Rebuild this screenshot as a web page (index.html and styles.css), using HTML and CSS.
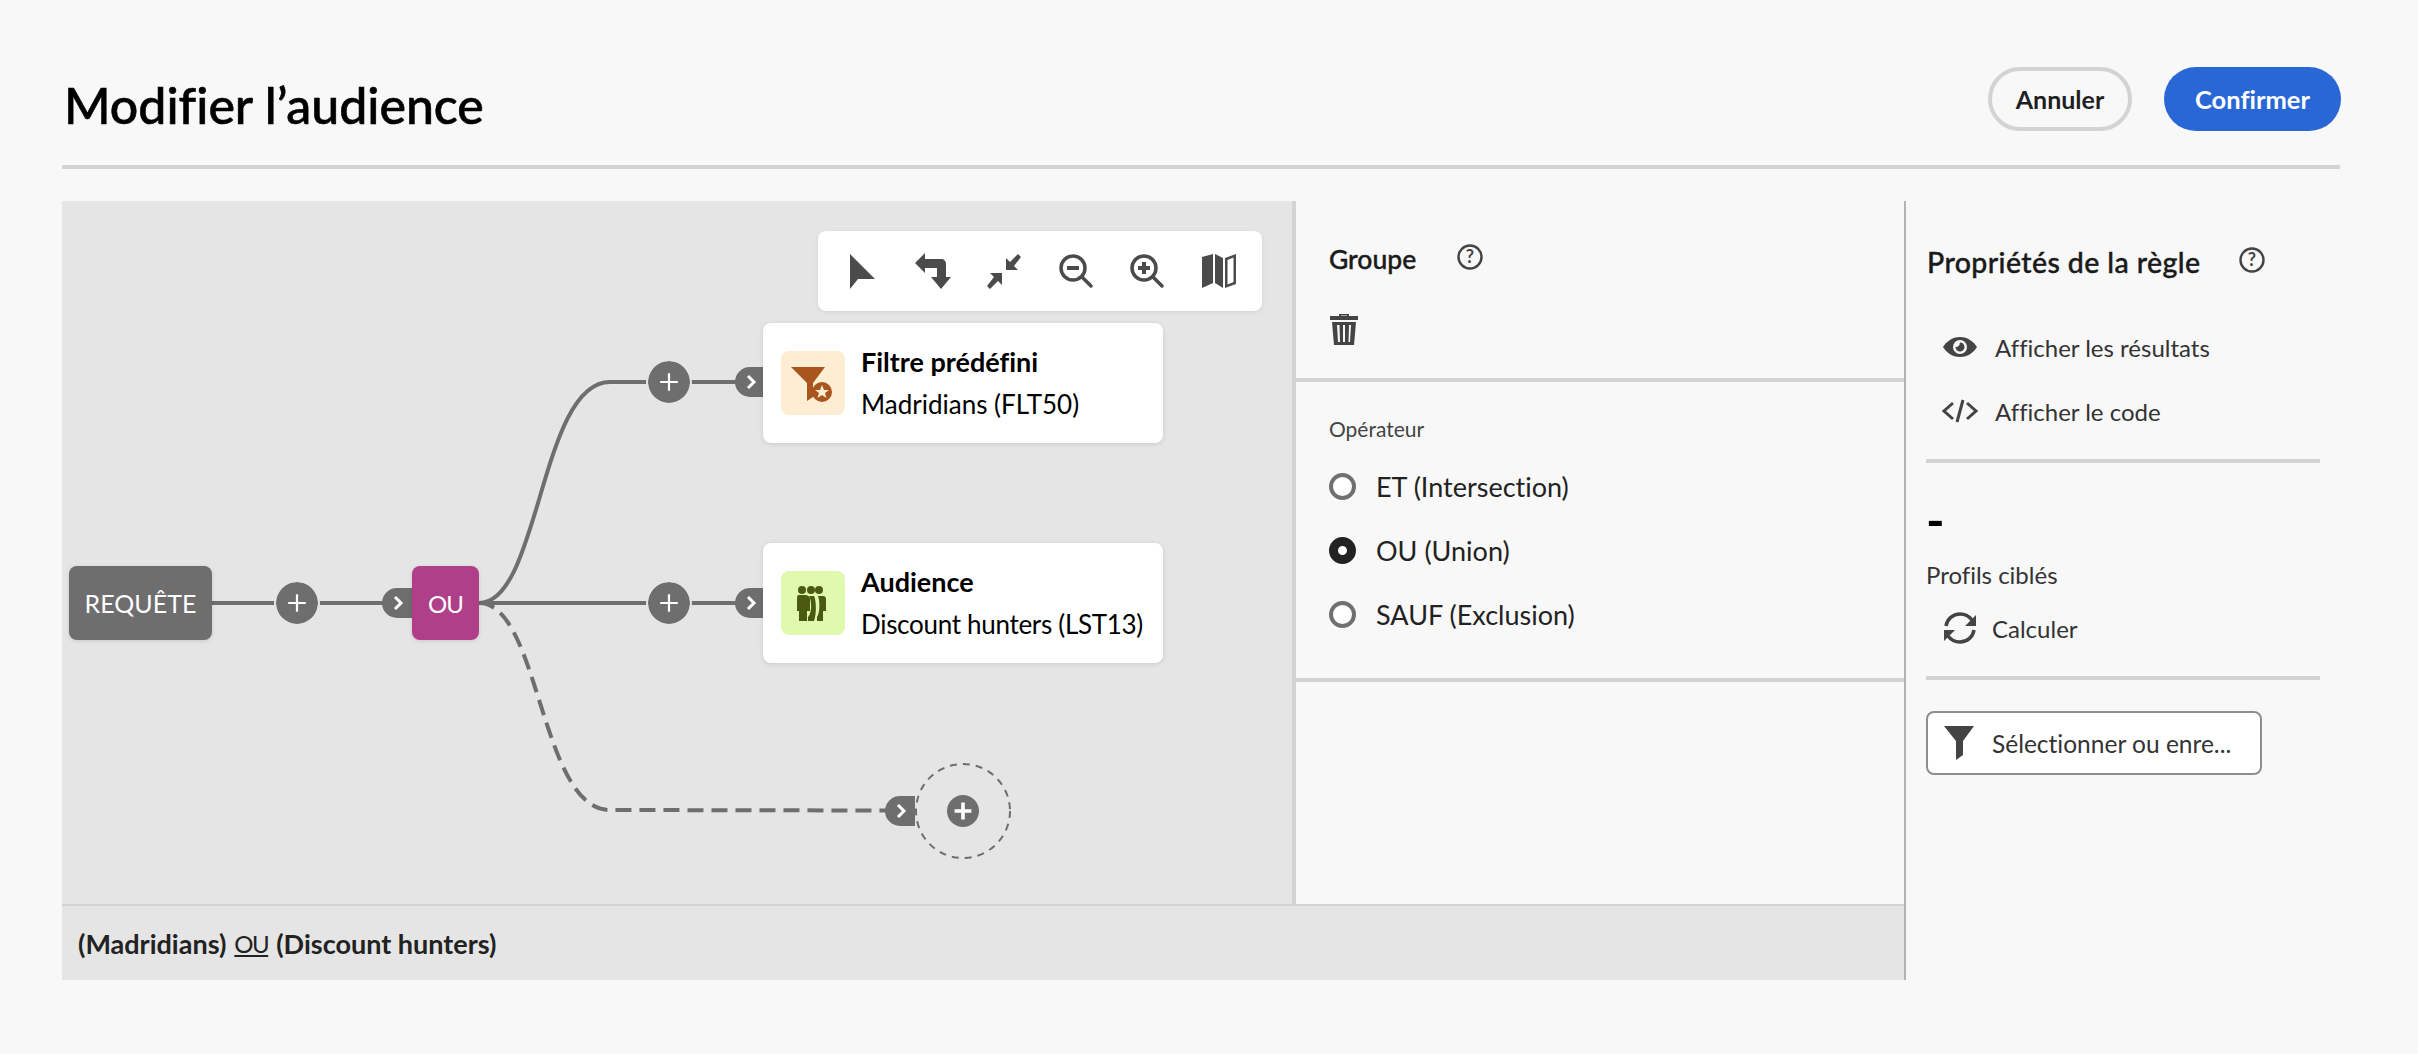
FILE: index.html
```html
<!DOCTYPE html>
<html lang="fr">
<head>
    <meta charset="UTF-8">
    <title>Modifier l'audience</title>
    <link rel="stylesheet" href="styles.css">
</head>
<body>
    <header class="page-header">
        <h1>Modifier l’audience</h1>
        <div class="header-actions">
            <button type="button" class="btn btn-cancel">Annuler</button>
            <button type="button" class="btn btn-confirm">Confirmer</button>
        </div>
    </header>

    <main class="workspace">
        <div class="editor">
            <div class="editor-top">
                <section class="canvas">
                    <svg class="links" width="1230" height="703" viewBox="0 0 1230 703">
                        <path class="link" d="M150 402H350"/>
                        <path class="link" d="M417 402C478 402 478 181 548 181H680"/>
                        <path class="link" d="M417 402H680"/>
                        <path class="link dashed" d="M417 402C478 402 478 609 548 609L830 609.5"/>
                        <circle class="drop-zone" cx="901" cy="610" r="47"/>
                    </svg>

                    <div class="toolbar">
                        <svg class="tool" viewBox="0 0 36 36"><path d="M7 1L32 26H15L7 36Z"/></svg>
                        <svg class="tool" viewBox="0 0 36 36"><path d="M0 10L10 0V6H26C29 6 31 8 31 11V24H36L26 36L16 24H22V15H10V20Z"/></svg>
                        <svg class="tool" viewBox="0 0 36 36"><path d="M35 4L32 1L24 9L20 5V17H32L28 13ZM1 33L4 36L12 28L16 32V20H4L8 24Z"/></svg>
                        <svg class="tool" viewBox="0 0 36 36"><circle class="ring" cx="15" cy="15" r="12"/><path class="ring" d="M24 24L33 33"/><path d="M9 13H21V17H9Z"/></svg>
                        <svg class="tool" viewBox="0 0 36 36"><circle class="ring" cx="15" cy="15" r="12"/><path class="ring" d="M24 24L33 33"/><path d="M9 13H13V9H17V13H21V17H17V21H13V17H9Z"/></svg>
                        <svg class="tool" viewBox="0 0 36 36"><path d="M1 4L12 1V30L1 35ZM14 1L22 5V35L14 30ZM24 5L35 1V31L24 35ZM26.500 7V31.500L32.500 29V4.500Z" fill-rule="evenodd"/></svg>
                    </div>

                    <div class="node node-query">REQUÊTE</div>
                    <button type="button" class="add add-1"><svg viewBox="0 0 20 20"><path d="M9 2H11V9H18V11H11V18H9V11H2V9H9Z"/></svg></button>
                    <div class="pill pill-1"><svg viewBox="0 0 12 16"><path d="M2 2L8 8L2 14" /></svg></div>
                    <div class="node node-or">OU</div>

                    <button type="button" class="add add-2"><svg viewBox="0 0 20 20"><path d="M9 2H11V9H18V11H11V18H9V11H2V9H9Z"/></svg></button>
                    <div class="pill pill-2"><svg viewBox="0 0 12 16"><path d="M2 2L8 8L2 14" /></svg></div>
                    <article class="card card-1">
                        <div class="tile tile-filter">
                            <svg viewBox="0 0 64 64">
                                <path d="M10 16H44L32 32V46L26 50V32Z"/>
                                <circle cx="41" cy="41" r="10"/>
                                <path class="star" d="M41 34L43 39H48L44 42L45.5 47L41 44L36.500 47L38 42L34 39H39Z"/>
                            </svg>
                        </div>
                        <div class="card-text">
                            <strong>Filtre prédéfini</strong>
                            <span>Madridians (FLT50)</span>
                        </div>
                    </article>

                    <button type="button" class="add add-3"><svg viewBox="0 0 20 20"><path d="M9 2H11V9H18V11H11V18H9V11H2V9H9Z"/></svg></button>
                    <div class="pill pill-3"><svg viewBox="0 0 12 16"><path d="M2 2L8 8L2 14" /></svg></div>
                    <article class="card card-2">
                        <div class="tile tile-audience">
                            <svg viewBox="0 0 64 64">
                                <circle cx="21" cy="19" r="4"/><circle cx="30" cy="19" r="4"/><circle cx="38" cy="19" r="4"/>
                                <path d="M37 25H42C44 25 45 26 45 28V40H42V50H36V46C39 42 39 30 37 25Z"/>
                                <path d="M28 25H33C35 28 36 42 33 50H27V46C31 42 31 30 28 25Z"/>
                                <path d="M18 24H24C27 24 29 26 29 28V40H26V50H18V40H16V28C16 26 16 24 18 24Z"/>
                            </svg>
                        </div>
                        <div class="card-text">
                            <strong>Audience</strong>
                            <span>Discount hunters (LST13)</span>
                        </div>
                    </article>

                    <div class="pill pill-4"><svg viewBox="0 0 12 16"><path d="M2 2L8 8L2 14" /></svg></div>
                    <button type="button" class="add-empty"><svg viewBox="0 0 20 20"><path d="M8.500 3H11.500V8.500H17V11.500H11.500V17H8.500V11.500H3V8.500H8.500Z"/></svg></button>
                </section>

                <section class="group-panel">
                    <div class="group-head">
                        <div class="title-row">
                            <h2>Groupe</h2>
                            <svg class="help" viewBox="0 0 26 26"><circle cx="13" cy="13" r="11.500"/><text x="13" y="18.500" text-anchor="middle">?</text></svg>
                        </div>
                        <svg class="trash" viewBox="0 0 30 32"><path d="M10 3V1H20V3H29V7H1V3ZM12 3H18V2.500H12ZM3 9H27L25 32H5ZM8 12L9 29H11L10.500 12ZM14 12V29H16V12ZM20 12L19.500 29H21L22 12Z" fill-rule="evenodd"/></svg>
                    </div>
                    <div class="operator">
                        <div class="field-label">Opérateur</div>
                        <label class="radio"><span class="dot"></span>ET (Intersection)</label>
                        <label class="radio"><span class="dot dot-on"></span>OU (Union)</label>
                        <label class="radio"><span class="dot"></span>SAUF (Exclusion)</label>
                    </div>
                </section>
            </div>
            <footer class="expression">
                <b>(Madridians)</b> <u>OU</u> <b>(Discount hunters)</b>
            </footer>
        </div>

        <aside class="rule-panel">
            <div class="title-row rule-title">
                <h2>Propriétés de la règle</h2>
                <svg class="help" viewBox="0 0 26 26"><circle cx="13" cy="13" r="11.500"/><text x="13" y="18.500" text-anchor="middle">?</text></svg>
            </div>
            <div class="rule-links">
                <div class="action">
                    <svg class="action-icon" viewBox="0 0 36 24"><path d="M18 2C26 2 32 7 35 12C32 17 26 22 18 22C10 22 4 17 1 12C4 7 10 2 18 2ZM18 5A7 7 0 1 0 18 19A7 7 0 1 0 18 5ZM18 7.500A4.500 4.500 0 1 1 13.500 12C15 12.500 18 11 18 7.500Z" fill-rule="evenodd"/></svg>
                    Afficher les résultats
                </div>
                <div class="action">
                    <svg class="action-icon" viewBox="0 0 36 24"><path class="code" d="M11 4L2 12L11 20M25 4L34 12L25 20M21 1L15 23"/></svg>
                    Afficher le code
                </div>
            </div>
            <div class="rule-count">
                <div class="count">-</div>
                <div class="count-label">Profils ciblés</div>
                <div class="action action-calc">
                    <svg class="action-icon" viewBox="0 0 36 32"><path class="code" d="M4 14C5 7 11 2 18 2C23 2 27 4 30 8M32 18C31 25 25 30 18 30C13 30 9 28 6 24"/><path d="M34 3V14H23ZM2 29V18H13Z"/></svg>
                    Calculer
                </div>
            </div>
            <button type="button" class="select-btn">
                <svg viewBox="0 0 30 34"><path d="M0 0H30L19 15V29L12 34V15Z"/></svg>
                Sélectionner ou enre...
            </button>
        </aside>
    </main>
</body>
</html>
```

FILE: styles.css
```css
/* Page */
body {
    margin: 0;
    padding: 0 78px 0 62px;
    height: 1054px;
    box-sizing: border-box;
    overflow: hidden;
    background-color: #f8f8f8;
    font-family: Lato, "Noto Sans", sans-serif;
    font-variant-ligatures: none;
    color: #000000;
}

button {
    font-family: inherit;
    font-variant-ligatures: none;
}

/* Header */
.page-header {
    display: flex;
    justify-content: space-between;
    height: 165px;
    border-bottom: 4px solid #d3d3d3;
}

h1 {
    margin: 75px 0 0 2px;
    font-size: 50px;
    line-height: 60px;
    font-weight: 500;
    -webkit-text-stroke: 0.6px #000000;
    color: #000000;
}

.header-actions {
    display: flex;
    gap: 32px;
    margin-top: 67px;
    margin-right: -1px;
}

.btn {
    height: 64px;
    border-radius: 32px;
    font-weight: 700;
    box-sizing: border-box;
}

.btn-cancel {
    width: 144px;
    background: transparent;
    border: 4px solid #d3d3d3;
    color: #1f1f1f;
    font-size: 25px;
}

.btn-confirm {
    width: 177px;
    background-color: #2a67d6;
    border: none;
    color: #ffffff;
    font-size: 25.5px;
}

/* Main layout */
.workspace {
    display: flex;
    height: 779px;
    margin-top: 32px;
}

.editor {
    width: 1842px;
    display: flex;
    flex-direction: column;
}

.editor-top {
    display: flex;
    height: 703px;
}

/* Canvas */
.canvas {
    position: relative;
    width: 1230px;
    background-color: #e5e5e5;
}

.links {
    position: absolute;
    left: 0;
    top: 0;
}

.link {
    fill: none;
    stroke: #6e6e6e;
    stroke-width: 4;
}

.dashed {
    stroke-dasharray: 16 8;
}

.drop-zone {
    fill: none;
    stroke: #6e6e6e;
    stroke-width: 2;
    stroke-dasharray: 7 6;
}

.toolbar {
    position: absolute;
    left: 756px;
    top: 30px;
    width: 444px;
    height: 80px;
    box-sizing: border-box;
    padding: 0 25px;
    display: flex;
    align-items: center;
    justify-content: space-between;
    background-color: #ffffff;
    border-radius: 8px;
    box-shadow: 0 1px 4px rgba(0, 0, 0, 0.08);
}

.tool {
    width: 36px;
    height: 36px;
    fill: #4b4b4b;
}

.ring {
    fill: none;
    stroke: #4b4b4b;
    stroke-width: 3.5;
    stroke-linecap: round;
}

.node {
    position: absolute;
    top: 365px;
    height: 74px;
    display: flex;
    align-items: center;
    justify-content: center;
    border-radius: 8px;
    color: #ffffff;
    font-size: 25px;
    box-shadow: 0 1px 4px rgba(0, 0, 0, 0.12);
}

.node-query {
    left: 7px;
    width: 143px;
    background-color: #6e6e6e;
}

.node-or {
    left: 350px;
    width: 67px;
    background-color: #b03f8a;
    font-size: 24px;
    letter-spacing: -1px;
}

.add {
    position: absolute;
    width: 46px;
    height: 46px;
    padding: 10px;
    box-sizing: border-box;
    border: 2px solid #e5e5e5;
    border-radius: 50%;
    background-color: #6e6e6e;
    background-clip: padding-box;
}

.add svg {
    display: block;
    width: 100%;
    height: 100%;
    fill: #ffffff;
}

.add-1 { left: 212px; top: 379px; }
.add-2 { left: 584px; top: 158px; }
.add-3 { left: 584px; top: 379px; }

.add-empty {
    position: absolute;
    left: 885px;
    top: 594px;
    width: 32px;
    height: 32px;
    padding: 4px;
    border: none;
    border-radius: 50%;
    background-color: #6e6e6e;
}

.add-empty svg {
    display: block;
    fill: #ffffff;
}

.pill {
    position: absolute;
    width: 30px;
    height: 30px;
    box-sizing: border-box;
    padding: 7px 0 0 11px;
    border-radius: 15px 0 0 15px;
    background-color: #6e6e6e;
}

.pill svg {
    display: block;
    width: 12px;
    height: 16px;
    fill: none;
    stroke: #ffffff;
    stroke-width: 3;
}

.pill-1 { left: 320px; top: 387px; }
.pill-2 { left: 673px; top: 166px; }
.pill-3 { left: 673px; top: 387px; }
.pill-4 { left: 823px; top: 595px; }

.card {
    position: absolute;
    left: 701px;
    width: 400px;
    height: 120px;
    box-sizing: border-box;
    padding: 28px 18px;
    display: flex;
    gap: 16px;
    background-color: #ffffff;
    border-radius: 8px;
    box-shadow: 0 1px 5px rgba(0, 0, 0, 0.12);
}

.card-1 { top: 122px; }
.card-2 { top: 342px; }

.card-2 span {
    letter-spacing: -0.3px;
}

.tile {
    flex: none;
    width: 64px;
    height: 64px;
    border-radius: 8px;
}

.tile svg {
    display: block;
}

.tile-filter {
    background-color: #fdeed3;
    fill: #a9551e;
}

.star {
    fill: #fdeed3;
}

.tile-audience {
    background-color: #e0f9ae;
    fill: #4a5a10;
}

.card-text {
    display: flex;
    flex-direction: column;
    margin-top: -10px;
    font-size: 26px;
    line-height: 42px;
    white-space: nowrap;
}

.card-text strong {
    font-size: 27px;
}

/* Group panel */
.group-panel {
    width: 612px;
    border-left: 4px solid #d3d3d3;
    box-sizing: border-box;
}

.group-head {
    height: 181px;
    box-sizing: border-box;
    padding: 42px 0 0 33px;
    border-bottom: 4px solid #d3d3d3;
}

.title-row {
    display: flex;
    align-items: center;
    height: 32px;
}

h2 {
    margin: 0;
    font-size: 26.5px;
    font-weight: 500;
    -webkit-text-stroke: 0.4px #1a1a1a;
    color: #1a1a1a;
}

.help {
    width: 26px;
    height: 26px;
    margin-left: 41px;
    margin-bottom: 4px;
}

.help circle {
    fill: none;
    stroke: #444444;
    stroke-width: 2.4;
}

.help text {
    font-size: 18px;
    font-weight: 700;
    fill: #444444;
}

.trash {
    display: block;
    width: 30px;
    height: 32px;
    margin-top: 38px;
    fill: #444444;
}

.operator {
    height: 300px;
    box-sizing: border-box;
    padding: 32px 0 0 33px;
    border-bottom: 4px solid #d3d3d3;
}

.field-label {
    font-size: 21px;
    line-height: 30px;
    margin-bottom: 10px;
    color: #444444;
}

.radio {
    display: flex;
    align-items: center;
    gap: 20px;
    height: 64px;
    font-size: 27px;
    color: #222222;
}

.dot {
    width: 27px;
    height: 27px;
    box-sizing: border-box;
    background-color: #ffffff;
    border: 4px solid #707070;
    border-radius: 50%;
}

.dot-on {
    background-color: #ffffff;
    border: 9px solid #222222;
}

/* Bottom expression */
.expression {
    height: 76px;
    box-sizing: border-box;
    padding-left: 16px;
    display: flex;
    align-items: center;
    gap: 8px;
    background-color: #e5e5e5;
    border-top: 2px solid #d3d3d3;
    font-size: 27px;
    color: #222222;
}

.expression b {
    font-weight: 700;
}

.expression u {
    font-size: 24px;
    letter-spacing: -1.5px;
}

/* Rule panel */
.rule-panel {
    flex: 1;
    border-left: 2px solid #b3b3b3;
    padding: 0 20px;
}

.rule-title {
    margin: 45px 0 0 1px;
}

.rule-title h2 {
    font-size: 28.5px;
    letter-spacing: 0.4px;
}

.rule-title .help {
    margin-left: 38px;
}

.rule-links {
    height: 185px;
    box-sizing: border-box;
    padding-top: 37px;
    border-bottom: 4px solid #d3d3d3;
}

.action {
    display: flex;
    align-items: center;
    gap: 17px;
    height: 64px;
    padding-left: 16px;
    font-size: 24px;
    color: #333333;
}

.action-icon {
    width: 36px;
    height: 24px;
    fill: #444444;
}

.code {
    fill: none;
    stroke: #444444;
    stroke-width: 3;
}

.action-calc .code {
    stroke-width: 3.5;
}

.rule-count {
    height: 217px;
    box-sizing: border-box;
    padding: 31px 0 0;
    border-bottom: 4px solid #d3d3d3;
}

.count {
    font-size: 50px;
    line-height: 52px;
    font-weight: 700;
}

.count-label {
    margin-top: 13px;
    font-size: 24px;
    line-height: 32px;
    color: #333333;
}

.action-calc {
    margin-top: 11px;
    height: 52px;
    gap: 14px;
}

.action-calc .action-icon {
    height: 32px;
}

.select-btn {
    display: flex;
    align-items: center;
    gap: 18px;
    width: 336px;
    height: 64px;
    margin-top: 31px;
    padding: 0 0 0 16px;
    background-color: #ffffff;
    border: 2px solid #8e8e8e;
    border-radius: 8px;
    font-size: 24.5px;
    color: #333333;
}

.select-btn svg {
    width: 30px;
    height: 34px;
    fill: #444444;
}
```
